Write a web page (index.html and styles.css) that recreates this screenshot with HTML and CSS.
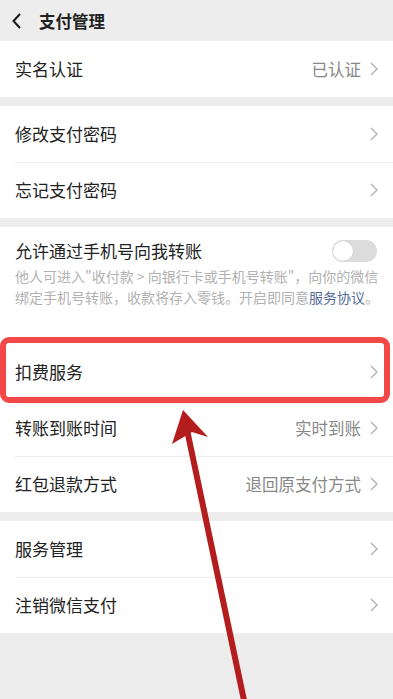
FILE: index.html
```html
<!DOCTYPE html>
<html lang="zh-CN">
<head>
<meta charset="utf-8">
<title>支付管理</title>
<link rel="stylesheet" href="styles.css">
</head>
<body>
<div class="page">
  <header class="topbar">
    <svg class="back" width="12" height="18" viewBox="0 0 12 18"><polyline points="9,2 2.5,9 9,16" fill="none" stroke="#1a1a1a" stroke-width="2"/></svg>
    <span class="title">支付管理</span>
  </header>

  <section class="group">
    <div class="row"><span class="label">实名认证</span><span class="right"><span class="value">已认证</span><svg class="chev" width="8" height="14" viewBox="0 0 8 14"><polyline points="1,1 7,7 1,13" fill="none" stroke="#b2b2b2" stroke-width="1.4"/></svg></span></div>
  </section>

  <section class="group">
    <div class="row"><span class="label">修改支付密码</span><span class="right"><svg class="chev" width="8" height="14" viewBox="0 0 8 14"><polyline points="1,1 7,7 1,13" fill="none" stroke="#b2b2b2" stroke-width="1.4"/></svg></span></div>
    <div class="row divided"><span class="label">忘记支付密码</span><span class="right"><svg class="chev" width="8" height="14" viewBox="0 0 8 14"><polyline points="1,1 7,7 1,13" fill="none" stroke="#b2b2b2" stroke-width="1.4"/></svg></span></div>
  </section>

  <section class="group">
    <div class="toggle-block">
      <div class="toggle-head"><span class="label">允许通过手机号向我转账</span><span class="switch"><span class="knob"></span></span></div>
      <p class="desc"><span class="line">他人可进入"收付款 &gt; 向银行卡或手机号转账"，向你的微信</span><span class="line">绑定手机号转账，收款将存入零钱。开启即同意<span class="link">服务协议</span>。</span></p>
    </div>
    <div class="row highlight"><span class="label">扣费服务</span><span class="right"><svg class="chev" width="8" height="14" viewBox="0 0 8 14"><polyline points="1,1 7,7 1,13" fill="none" stroke="#b2b2b2" stroke-width="1.4"/></svg></span><span class="mark"></span></div>
    <div class="row"><span class="label">转账到账时间</span><span class="right"><span class="value">实时到账</span><svg class="chev" width="8" height="14" viewBox="0 0 8 14"><polyline points="1,1 7,7 1,13" fill="none" stroke="#b2b2b2" stroke-width="1.4"/></svg></span></div>
    <div class="row divided"><span class="label">红包退款方式</span><span class="right"><span class="value">退回原支付方式</span><svg class="chev" width="8" height="14" viewBox="0 0 8 14"><polyline points="1,1 7,7 1,13" fill="none" stroke="#b2b2b2" stroke-width="1.4"/></svg></span></div>
  </section>

  <section class="group">
    <div class="row"><span class="label">服务管理</span><span class="right"><svg class="chev" width="8" height="14" viewBox="0 0 8 14"><polyline points="1,1 7,7 1,13" fill="none" stroke="#b2b2b2" stroke-width="1.4"/></svg></span></div>
    <div class="row divided"><span class="label">注销微信支付</span><span class="right"><svg class="chev" width="8" height="14" viewBox="0 0 8 14"><polyline points="1,1 7,7 1,13" fill="none" stroke="#b2b2b2" stroke-width="1.4"/></svg></span></div>
  </section>

  <svg class="arrow" width="393" height="699" viewBox="0 0 393 699">
    <line x1="245" y1="705" x2="186" y2="425" stroke="#b41d1d" stroke-width="6"/>
    <polygon points="183,410 208,437 192,432 172,444" fill="#b41d1d"/>
  </svg>
</div>
</body>
</html>
```

FILE: styles.css
```css
* { box-sizing: border-box; }
html, body { margin: 0; padding: 0; }
body {
  background: #ededed;
  font-family: "Noto Sans CJK SC", "Noto Sans", sans-serif;
  color: #222;
}
.page {
  position: relative;
  width: 393px;
  height: 699px;
  overflow: hidden;
  background: #ededed;
}
.topbar {
  height: 41px;
  display: flex;
  align-items: center;
  padding-left: 11px;
  gap: 16px;
}
.topbar .title {
  font-size: 16.5px;
  font-weight: 700;
  color: #222;
}
.back { display: block; }
.group {
  background: #fff;
  margin-bottom: 9px;
}
.row {
  position: relative;
  height: 56px;
  display: flex;
  align-items: center;
  justify-content: space-between;
  padding: 0 15px;
}
.row.divided::before {
  content: "";
  position: absolute;
  left: 15px;
  right: 0;
  top: 0;
  height: 1px;
  background: #ececec;
}
.label {
  font-size: 17px;
  line-height: 20px;
  color: #222;
}
.right {
  display: flex;
  align-items: center;
  gap: 9px;
}
.value {
  font-size: 16.5px;
  color: #888;
}
.chev { display: block; }
.toggle-block {
  padding: 14px 15px 36px;
}
.toggle-head {
  display: flex;
  align-items: center;
  justify-content: space-between;
  height: 20px;
}
.switch {
  position: relative;
  width: 45px;
  height: 22px;
  border-radius: 11px;
  background: #dcdcdc;
  margin-right: 1px;
}
.knob {
  position: absolute;
  left: 1px;
  top: 1px;
  width: 20px;
  height: 20px;
  border-radius: 50%;
  background: #fff;
  box-shadow: 0 0 1px rgba(0,0,0,0.25);
}
.desc {
  margin: 5px 0 0;
  font-size: 14px;
  line-height: 21px;
  color: #b2b2b2;
}
.desc .line {
  display: block;
  white-space: nowrap;
}
.link { color: #576b95; }
.mark {
  position: absolute;
  left: 0;
  right: 3px;
  top: -7px;
  bottom: -3px;
  border: 6px solid #f14848;
  border-radius: 9px;
  pointer-events: none;
}
.arrow {
  position: absolute;
  left: 0;
  top: 0;
  pointer-events: none;
}
```
